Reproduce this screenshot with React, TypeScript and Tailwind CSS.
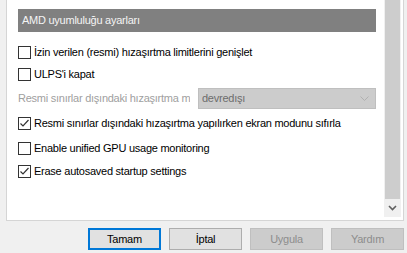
import React from "react";

const font = { fontFamily: '"Liberation Sans", Arial, sans-serif' };

const CheckBox = ({ checked }: { checked?: boolean }) => (
  <div className="w-[13px] h-[13px] border border-[#333333] bg-white flex items-center justify-center shrink-0">
    {checked && (
      <svg width="11" height="11" viewBox="0 0 11 11">
        <polyline points="1.5,5.5 4,8 9.5,2" fill="none" stroke="#333333" strokeWidth="1.2" />
      </svg>
    )}
  </div>
);

const CheckRow = ({ label, checked, className }: { label: string; checked?: boolean; className: string }) => (
  <div className={`flex items-center h-[20px] gap-[3px] ${className}`}>
    <CheckBox checked={checked} />
    <span className="text-[11px] tracking-[-0.25px] text-black whitespace-nowrap">{label}</span>
  </div>
);

const Button = ({ label, primary, disabled }: { label: string; primary?: boolean; disabled?: boolean }) => {
  let cls = "border border-[#adadad] bg-[#e1e1e1] text-black";
  if (primary) cls = "border-2 border-[#0078d7] bg-[#e1e1e1] text-black";
  if (disabled) cls = "border border-[#bfbfbf] bg-[#cccccc] text-[#8d8d8d]";
  return (
    <div className={`w-[73px] h-[22px] flex items-center justify-center text-[11px] tracking-[-0.25px] ${cls}`}>
      {label}
    </div>
  );
};

export default function App() {
  return (
    <div className="w-[407px] h-[253px] bg-[#f0f0f0] overflow-hidden" style={font}>
      <div className="ml-[6px] w-[398px] h-[221px] bg-white border-x border-b border-[#d5d5d5] flex">
        <div className="flex-1 pl-[11px] pr-[8px] flex flex-col">
          <div className="mt-[9px] h-[23px] bg-[#808080] text-[#f4f4f4] text-[11px] tracking-[-0.25px] flex items-center pl-[4px]">
            AMD uyumluluğu ayarları
          </div>
          <CheckRow className="mt-[10px]" label="İzin verilen (resmi) hızaşırtma limitlerini genişlet" />
          <CheckRow className="mt-[2px]" label="ULPS'i kapat" />
          <div className="mt-[4px] h-[21px] flex items-center gap-[8px]">
            <div className="w-[172px] overflow-hidden whitespace-nowrap text-[11px] tracking-[-0.25px] text-[#a0a0a0]">
              Resmi sınırlar dışındaki hızaşırtma modu
            </div>
            <div className="flex-1 h-[21px] bg-[#cccccc] border border-[#bfbfbf] flex items-center justify-between pl-[3px] pr-[6px]">
              <span className="text-[11px] tracking-[-0.25px] text-[#6d6d6d]">devredışı</span>
              <svg width="9" height="6" viewBox="0 0 9 6">
                <polyline points="0.5,0.5 4.5,4.5 8.5,0.5" fill="none" stroke="#b0b0b0" strokeWidth="1" />
              </svg>
            </div>
          </div>
          <CheckRow className="mt-[4px]" checked label="Resmi sınırlar dışındaki hızaşırtma yapılırken ekran modunu sıfırla" />
          <CheckRow className="mt-[5px]" label="Enable unified GPU usage monitoring" />
          <CheckRow className="mt-[3px]" checked label="Erase autosaved startup settings" />
        </div>
        <div className="w-[17px] h-[217px] mr-[2px] bg-[#f0f0f0] flex flex-col">
          <div className="h-[199px] mx-[1px] bg-[#cdcdcd]" />
          <div className="flex-1 flex items-center justify-center">
            <svg width="9" height="6" viewBox="0 0 9 6">
              <polyline points="1,1 4.5,4.5 8,1" fill="none" stroke="#606060" strokeWidth="1.6" />
            </svg>
          </div>
        </div>
      </div>
      <div className="mt-[7px] flex justify-end gap-[8px] pr-[3px]">
        <Button label="Tamam" primary />
        <Button label="İptal" />
        <Button label="Uygula" disabled />
        <Button label="Yardım" disabled />
      </div>
    </div>
  );
}
